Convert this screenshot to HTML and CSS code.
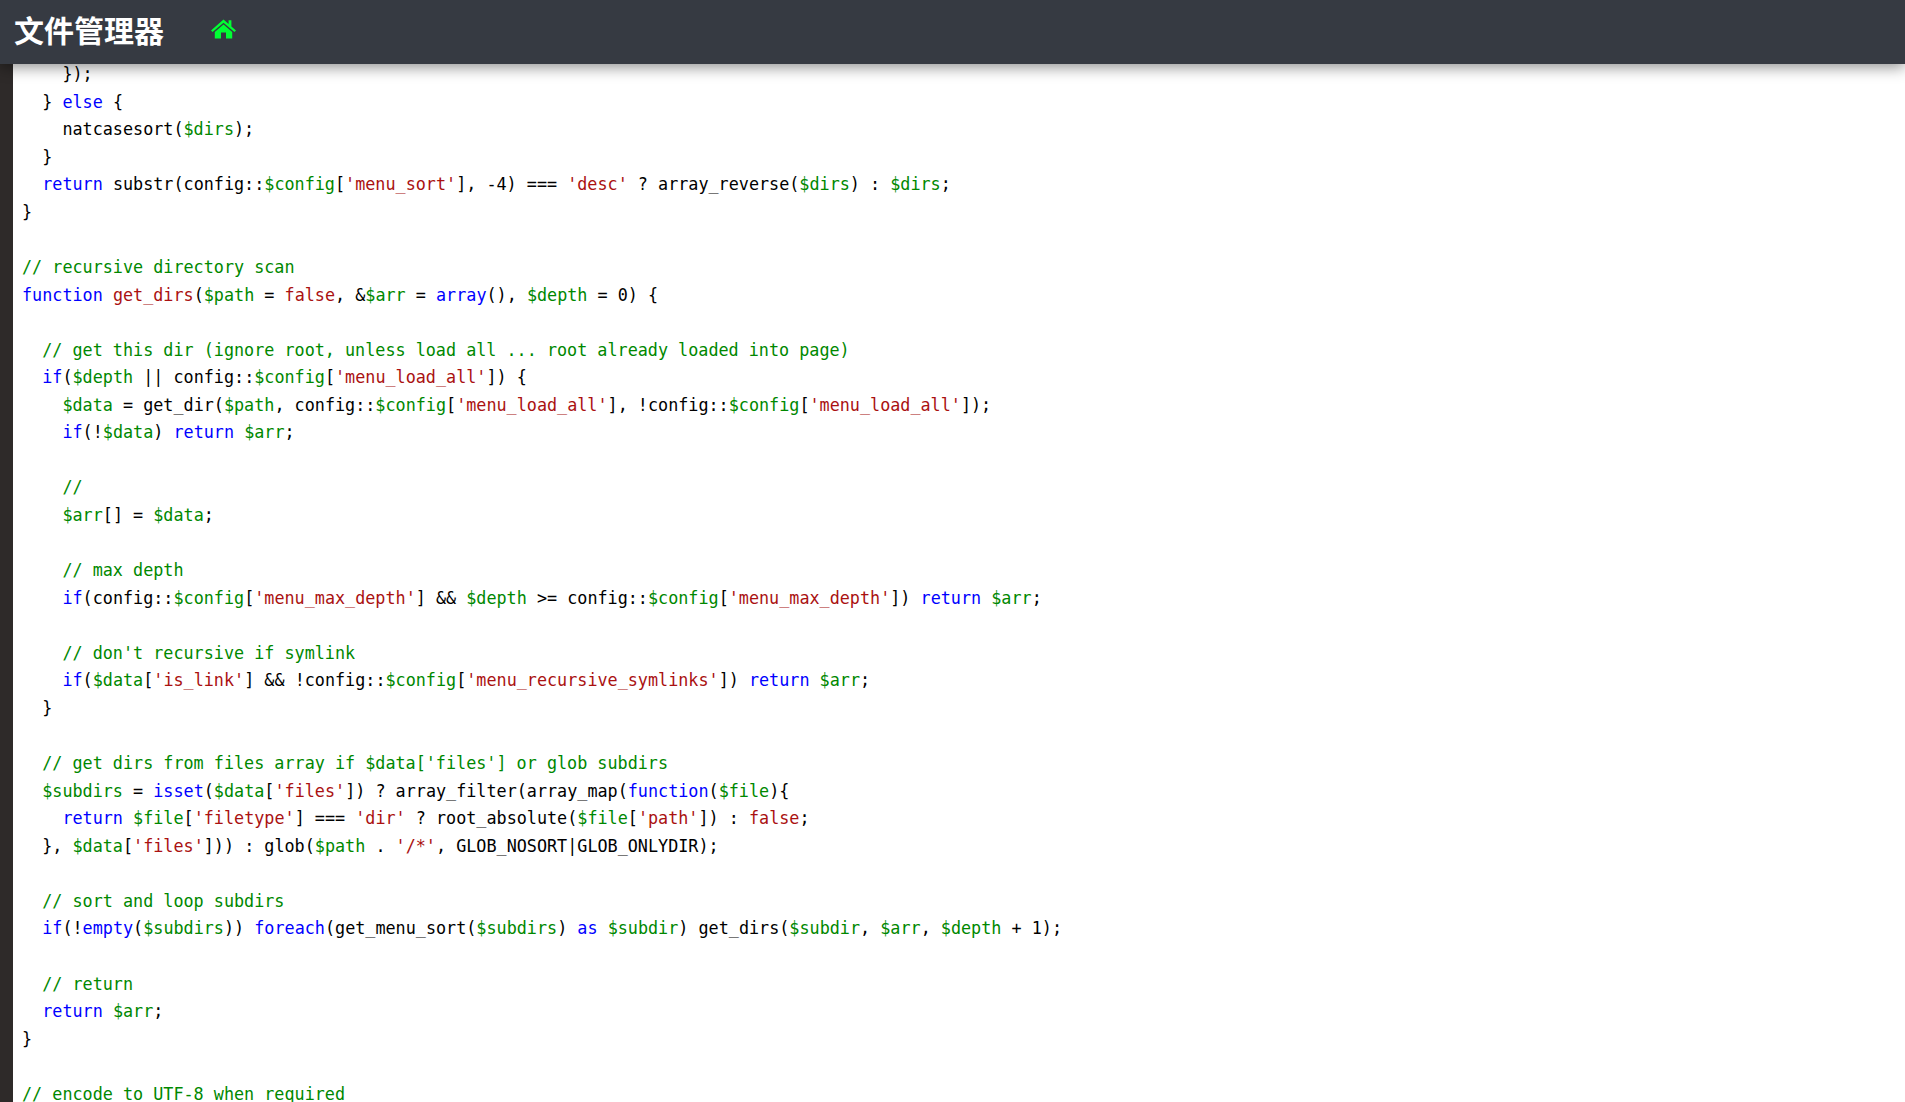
FILE: index.html
```html
<!DOCTYPE html>
<html lang="zh-CN">
<head>
    <meta charset="UTF-8">
    <meta name="viewport" content="width=device-width, initial-scale=1.0">
    <title>文件管理器</title>
    <link rel="stylesheet" href="styles.css">
</head>
<body>
    <header class="topbar">
        <h1 class="brand">文件管理器</h1>
        <a class="home-link" href="#" aria-label="home">
            <svg class="home-icon" viewBox="0 0 25 21" aria-hidden="true">
                <path d="M12.5 1.6 L17.6 6 V2.2 H20.4 V8.4 L25 12.4 L23.4 14 L12.5 4.7 L1.6 14 L0 12.4 Z"/>
                <path d="M12.5 6.6 L21.2 14 V20.6 H15 V14.6 H10 V20.6 H3.8 V14 Z"/>
            </svg>
        </a>
    </header>
    <main class="viewer">
<pre class="code">    <span class="p">});</span>
  } <span class="k">else</span> {
    natcasesort(<span class="v">$dirs</span>);
  }
  <span class="k">return</span> substr(config::<span class="v">$config</span>[<span class="s">'menu_sort'</span>], -4) === <span class="s">'desc'</span> ? array_reverse(<span class="v">$dirs</span>) : <span class="v">$dirs</span>;
}

<span class="c">// recursive directory scan</span>
<span class="k">function</span> <span class="s">get_dirs</span>(<span class="v">$path</span> = <span class="s">false</span>, &amp;<span class="v">$arr</span> = <span class="k">array</span>(), <span class="v">$depth</span> = 0) {

  <span class="c">// get this dir (ignore root, unless load all ... root already loaded into page)</span>
  <span class="k">if</span>(<span class="v">$depth</span> || config::<span class="v">$config</span>[<span class="s">'menu_load_all'</span>]) {
    <span class="v">$data</span> = get_dir(<span class="v">$path</span>, config::<span class="v">$config</span>[<span class="s">'menu_load_all'</span>], !config::<span class="v">$config</span>[<span class="s">'menu_load_all'</span>]);
    <span class="k">if</span>(!<span class="v">$data</span>) <span class="k">return</span> <span class="v">$arr</span>;

    <span class="c">//</span>
    <span class="v">$arr</span>[] = <span class="v">$data</span>;

    <span class="c">// max depth</span>
    <span class="k">if</span>(config::<span class="v">$config</span>[<span class="s">'menu_max_depth'</span>] &amp;&amp; <span class="v">$depth</span> &gt;= config::<span class="v">$config</span>[<span class="s">'menu_max_depth'</span>]) <span class="k">return</span> <span class="v">$arr</span>;

    <span class="c">// don't recursive if symlink</span>
    <span class="k">if</span>(<span class="v">$data</span>[<span class="s">'is_link'</span>] &amp;&amp; !config::<span class="v">$config</span>[<span class="s">'menu_recursive_symlinks'</span>]) <span class="k">return</span> <span class="v">$arr</span>;
  }

  <span class="c">// get dirs from files array if $data['files'] or glob subdirs</span>
  <span class="v">$subdirs</span> = <span class="k">isset</span>(<span class="v">$data</span>[<span class="s">'files'</span>]) ? array_filter(array_map(<span class="k">function</span>(<span class="v">$file</span>){
    <span class="k">return</span> <span class="v">$file</span>[<span class="s">'filetype'</span>] === <span class="s">'dir'</span> ? root_absolute(<span class="v">$file</span>[<span class="s">'path'</span>]) : <span class="s">false</span>;
  }, <span class="v">$data</span>[<span class="s">'files'</span>])) : glob(<span class="v">$path</span> . <span class="s">'/*'</span>, GLOB_NOSORT|GLOB_ONLYDIR);

  <span class="c">// sort and loop subdirs</span>
  <span class="k">if</span>(!<span class="k">empty</span>(<span class="v">$subdirs</span>)) <span class="k">foreach</span>(get_menu_sort(<span class="v">$subdirs</span>) <span class="k">as</span> <span class="v">$subdir</span>) get_dirs(<span class="v">$subdir</span>, <span class="v">$arr</span>, <span class="v">$depth</span> + 1);

  <span class="c">// return</span>
  <span class="k">return</span> <span class="v">$arr</span>;
}

<span class="c">// encode to UTF-8 when required</span></pre>
    </main>
</body>
</html>
```

FILE: styles.css
```css
html, body {
    margin: 0;
    height: 100%;
    overflow: hidden;
}
body {
    background: #2e2a29;
    display: flex;
    flex-direction: column;
}
.topbar {
    position: relative;
    z-index: 2;
    flex: none;
    height: 64px;
    background: #363a42;
    box-shadow: 0 3px 14px rgba(0, 0, 0, 0.45);
    display: flex;
    align-items: center;
    padding-left: 14px;
}
.brand {
    margin: 0 0 6px;
    width: 197px;
    font: bold 30px/1 "Noto Sans CJK SC", "Liberation Sans", sans-serif;
    color: #fff;
}
.home-link {
    display: flex;
    margin-bottom: 7px;
}
.home-icon {
    width: 25px;
    height: 21px;
    fill: #00ff33;
}
.viewer {
    flex: 1;
    min-height: 0;
    margin-left: 13px;
    background: #fff;
    overflow: hidden;
}
.code {
    margin: -3px 0 0;
    padding-left: 9px;
    font-family: "DejaVu Sans Mono", "Liberation Mono", monospace;
    font-size: 16.77px;
    line-height: 27.57px;
    color: #000;
}
.k { color: #00f; }
.v { color: #080; }
.s { color: #a11; }
.c { color: #080; }
.p { color: #000; }
```
